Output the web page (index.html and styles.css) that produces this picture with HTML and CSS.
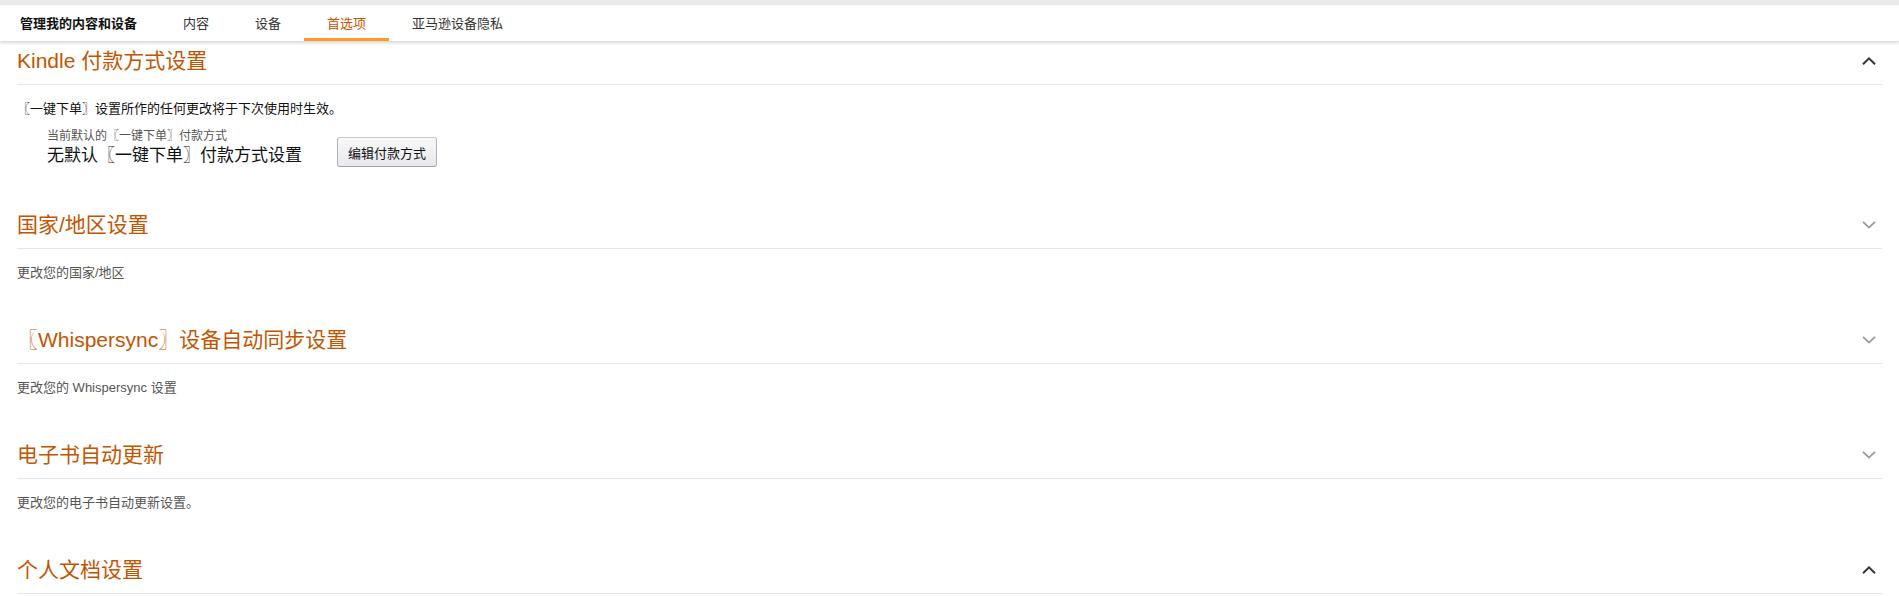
FILE: index.html
```html
<!DOCTYPE html>
<html lang="zh-CN">
<head>
<meta charset="utf-8">
<title>管理我的内容和设备</title>
<link rel="stylesheet" href="styles.css">
</head>
<body>
<div class="topbar"></div>
<nav class="nav">
  <div class="nav-title">管理我的内容和设备</div>
  <a class="tab">内容</a>
  <a class="tab">设备</a>
  <a class="tab active">首选项</a>
  <a class="tab">亚马逊设备隐私</a>
</nav>
<main class="main">
  <section class="section">
    <div class="sec-head">
      <h2 class="sec-title">Kindle 付款方式设置</h2>
      <svg class="chev up" width="14" height="8" viewBox="0 0 14 8"><path d="M1 7.2 L7 1.4 L13 7.2" fill="none" stroke="currentColor" stroke-width="2"/></svg>
    </div>
    <div class="sec-body">
      <p class="note">〖一键下单〗设置所作的任何更改将于下次使用时生效。</p>
      <div class="pay-row">
        <div class="pay-info">
          <div class="pay-label">当前默认的〖一键下单〗付款方式</div>
          <div class="pay-value">无默认〖一键下单〗付款方式设置</div>
        </div>
        <button class="btn">编辑付款方式</button>
      </div>
    </div>
  </section>
  <section class="section">
    <div class="sec-head">
      <h2 class="sec-title">国家/地区设置</h2>
      <svg class="chev down" width="14" height="8" viewBox="0 0 14 8"><path d="M1 0.8 L7 6.6 L13 0.8" fill="none" stroke="currentColor" stroke-width="1.8"/></svg>
    </div>
    <div class="sec-body">
      <p class="desc">更改您的国家/地区</p>
    </div>
  </section>
  <section class="section">
    <div class="sec-head">
      <h2 class="sec-title">〖Whispersync〗设备自动同步设置</h2>
      <svg class="chev down" width="14" height="8" viewBox="0 0 14 8"><path d="M1 0.8 L7 6.6 L13 0.8" fill="none" stroke="currentColor" stroke-width="1.8"/></svg>
    </div>
    <div class="sec-body">
      <p class="desc">更改您的 Whispersync 设置</p>
    </div>
  </section>
  <section class="section">
    <div class="sec-head">
      <h2 class="sec-title">电子书自动更新</h2>
      <svg class="chev down" width="14" height="8" viewBox="0 0 14 8"><path d="M1 0.8 L7 6.6 L13 0.8" fill="none" stroke="currentColor" stroke-width="1.8"/></svg>
    </div>
    <div class="sec-body">
      <p class="desc">更改您的电子书自动更新设置。</p>
    </div>
  </section>
  <section class="section">
    <div class="sec-head">
      <h2 class="sec-title">个人文档设置</h2>
      <svg class="chev up" width="14" height="8" viewBox="0 0 14 8"><path d="M1 7.2 L7 1.4 L13 7.2" fill="none" stroke="currentColor" stroke-width="2"/></svg>
    </div>
  </section>
</main>
</body>
</html>
```
FILE: styles.css
```css
* { box-sizing: border-box; }
html, body { margin: 0; padding: 0; background: #fff; }
body {
  font-family: "Liberation Sans", "Noto Sans CJK SC", Arial, sans-serif;
  color: #111;
  overflow: hidden;
}
.topbar { height: 5px; background: #ebebeb; }
.nav {
  height: 36px;
  display: flex;
  align-items: stretch;
  background: #fff;
  box-shadow: 0 2px 3px rgba(0,0,0,0.16);
  padding-left: 20px;
  position: relative;
}
.nav-title {
  font-size: 13px;
  font-weight: bold;
  color: #111;
  display: flex;
  align-items: center;
  margin-right: 23px;
  padding-bottom: 2px;
}
.tab {
  font-size: 13px;
  color: #333;
  padding: 0 23px;
  display: flex;
  align-items: center;
  border-bottom: 3px solid transparent;
  padding-top: 2px;
}
.tab.active { color: #c45500; border-bottom-color: #fe9a25; }
.main { padding: 1px 17px 0; }
.sec-head {
  display: flex;
  align-items: center;
  justify-content: space-between;
  padding: 4px 6px 8px 0;
  border-bottom: 1px solid #e7e7e7;
}
.sec-title {
  margin: 0;
  font-size: 21px;
  font-weight: normal;
  line-height: 30px;
  color: #c45500;
}
.chev { display: block; }
.chev.up { color: #333; }
.chev.down { color: #9a9a9a; }
.sec-body { padding: 15px 0 39px; }
.note { margin: 0; font-size: 13px; line-height: 18px; color: #111; }
.desc { margin: 0; font-size: 13px; line-height: 18px; color: #555; }
.pay-row {
  display: flex;
  align-items: flex-end;
  margin-top: 10px;
  padding-left: 30px;
}
.pay-label { font-size: 12px; line-height: 17px; color: #555; }
.pay-value { font-size: 17px; line-height: 22px; color: #111; }
.btn {
  margin-left: 35px;
  height: 30px;
  padding: 0 10px;
  font-family: inherit;
  font-size: 13px;
  color: #111;
  border: 1px solid #adb1b8;
  border-top-color: #c2c5cb;
  border-bottom-color: #9fa3a9;
  border-radius: 3px;
  background: linear-gradient(#f7f8fa, #e7e9ec);
  box-shadow: 0 1px 0 rgba(255,255,255,0.6) inset;
}
```
